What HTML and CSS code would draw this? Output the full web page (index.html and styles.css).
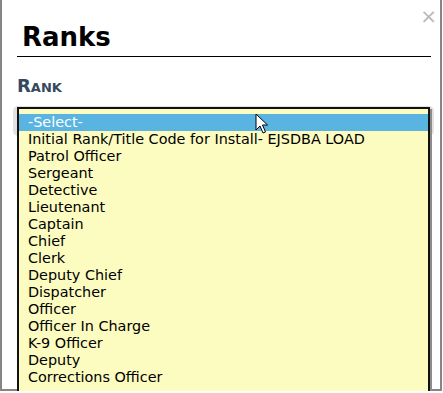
FILE: index.html
```html
<!DOCTYPE html>
<html>
<head>
<meta charset="utf-8">
<link rel="stylesheet" href="styles.css">
</head>
<body>
<div class="dialog">
  <button class="close" type="button">×</button>
  <div class="header"><h1 class="title">Ranks</h1></div>
  <div class="field">
    <label class="label">Rank</label>
    <div class="select-wrap">
      <ul class="dropdown">
        <li class="opt selected">-Select-</li>
        <li class="opt">Initial Rank/Title Code for Install- EJSDBA LOAD</li>
        <li class="opt">Patrol Officer</li>
        <li class="opt">Sergeant</li>
        <li class="opt">Detective</li>
        <li class="opt">Lieutenant</li>
        <li class="opt">Captain</li>
        <li class="opt">Chief</li>
        <li class="opt">Clerk</li>
        <li class="opt">Deputy Chief</li>
        <li class="opt">Dispatcher</li>
        <li class="opt">Officer</li>
        <li class="opt">Officer In Charge</li>
        <li class="opt">K-9 Officer</li>
        <li class="opt">Deputy</li>
        <li class="opt">Corrections Officer</li>
      </ul>
      <svg class="cursor" width="14" height="22" viewBox="0 0 14 22">
        <path d="M1 1 L1 17 L5 13 L8 20 L10.5 19 L7.5 12 L12.5 12 Z" fill="#fff" stroke="#000" stroke-width="1" stroke-linejoin="miter"/>
      </svg>
    </div>
  </div>
</div>
</body>
</html>
```

FILE: styles.css
```css
html, body {
  margin: 0;
  padding: 0;
  background: #fff;
}

body {
  font-family: "DejaVu Sans", Verdana, sans-serif;
  color: #000;
}

.dialog {
  position: relative;
  box-sizing: border-box;
  width: 442px;
  height: 391px;
  border: 2px solid #858585;
  border-top: none;
  padding: 0 6px 0 11px;
  background: #fff;
}

.close {
  position: absolute;
  top: 6px;
  right: 3px;
  border: none;
  background: none;
  padding: 0;
  margin: 0;
  font-family: "DejaVu Sans", sans-serif;
  font-size: 20px;
  line-height: 20px;
  color: #b8b8b8;
  cursor: pointer;
}

.header {
  margin: 0 3px 0 4px;
  padding: 22px 0 4px 5px;
  border-bottom: 1px solid #000;
}

.title {
  margin: 0;
  font-size: 26px;
  line-height: 30px;
  font-weight: bold;
}

.field {
  margin-top: 18px;
}

.label {
  display: block;
  padding-left: 4px;
  font-size: 18px;
  line-height: 22px;
  font-weight: bold;
  font-variant: small-caps;
  color: #34495e;
}

.select-wrap {
  position: relative;
  margin-top: 9px;
  height: 30px;
  background: #e2e2e2;
  border-radius: 5px;
}

.dropdown {
  position: absolute;
  top: 1px;
  left: 4px;
  width: 413px;
  box-sizing: border-box;
  margin: 0;
  padding: 5px 0 5px;
  list-style: none;
  background: #fcfcc0;
  border: 2px solid #111;
  box-shadow: 2px 2px 0 #8c8c8c;
  z-index: 2;
}

.opt {
  font-size: 14.4px;
  line-height: 17px;
  height: 17px;
  padding-left: 9px;
  white-space: nowrap;
  color: #000;
}

.opt.selected {
  background: #5ab4e1;
  color: #fff;
}

.cursor {
  position: absolute;
  left: 242px;
  top: 7px;
  z-index: 3;
}
```
